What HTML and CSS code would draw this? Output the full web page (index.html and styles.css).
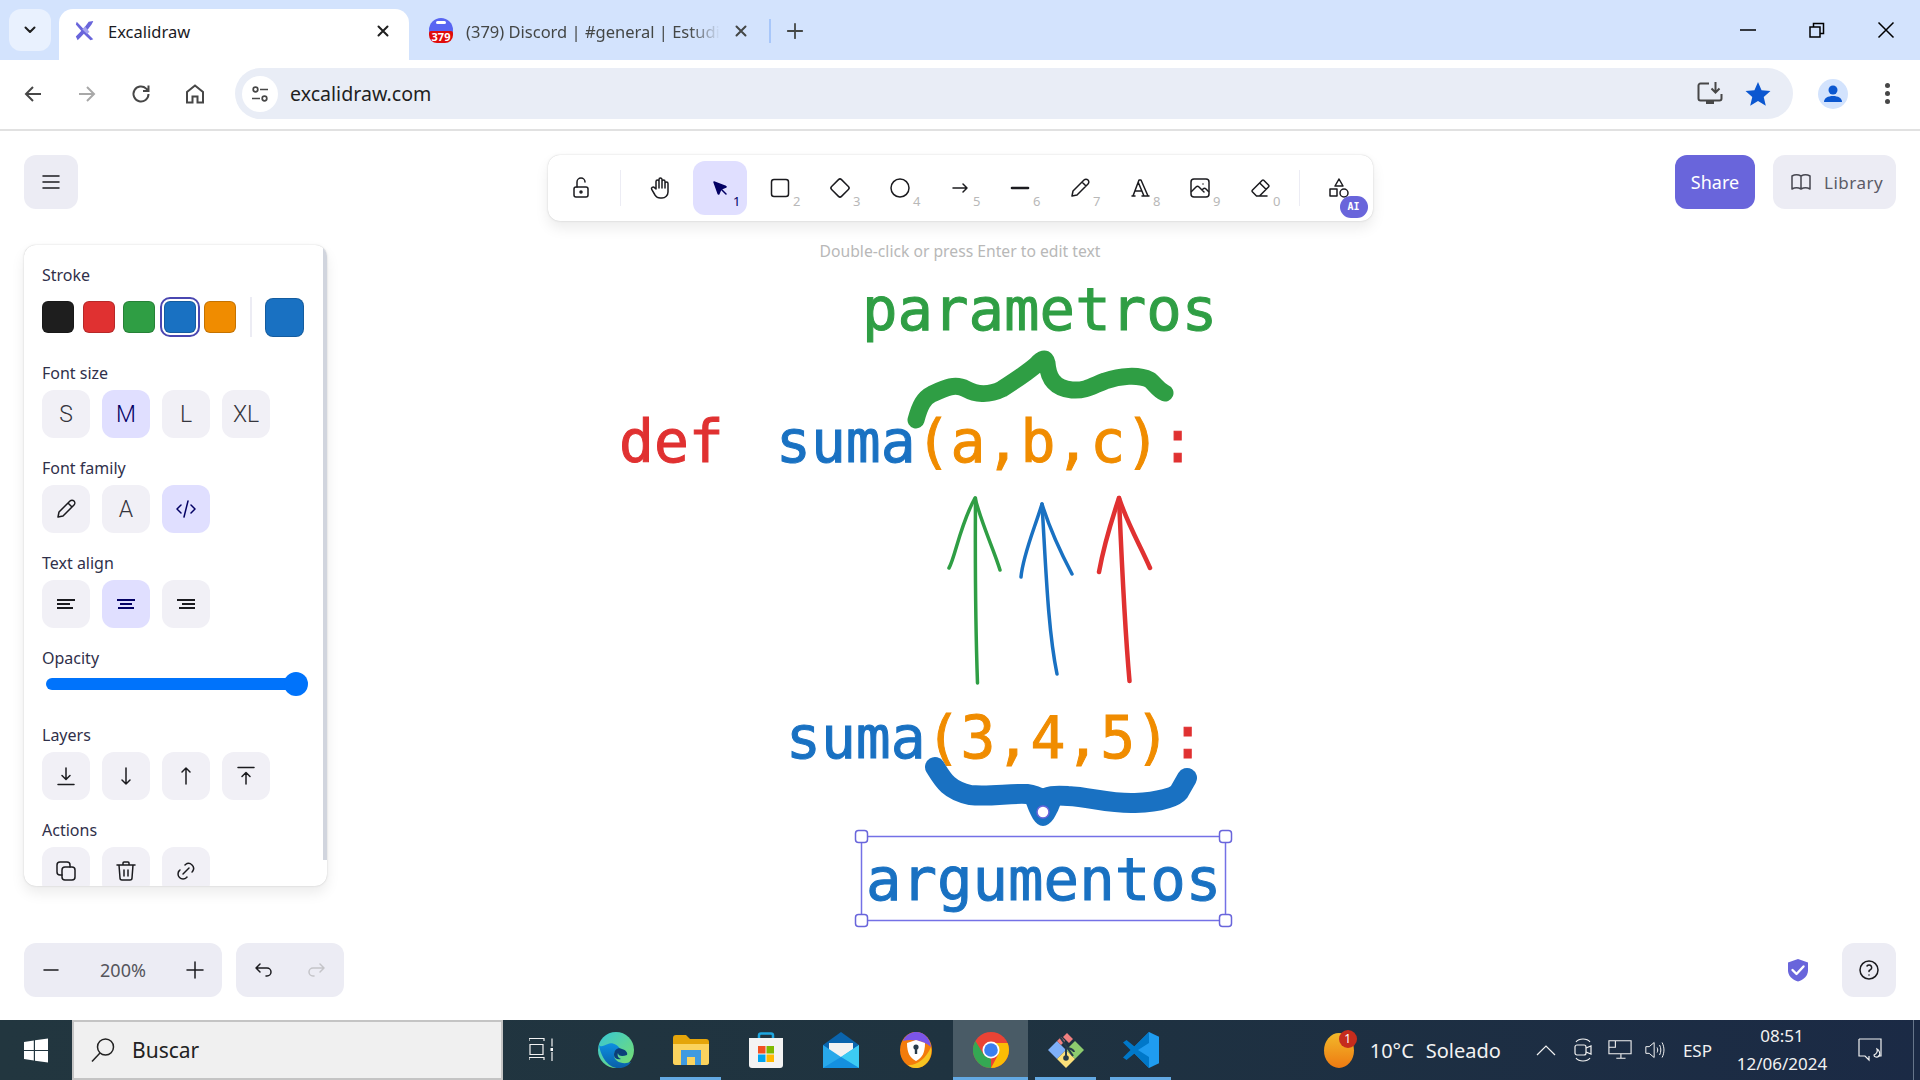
FILE: index.html
```html
<!DOCTYPE html>
<html lang="en">
<head>
    <meta charset="UTF-8">
    <meta name="viewport" content="width=device-width, initial-scale=1.0">
    <title>Excalidraw</title>
    <link rel="stylesheet" href="styles.css">
</head>
<body>

    <!-- browser tabs -->
    <div class="tabstrip">
        <div class="tabSearch">
            <svg class="ico16" viewBox="0 0 16 16"><path d="M3.500 5.500L8 10l4.500-4.500" class="thick"/></svg>
        </div>
        <div class="tab tabActive">
            <svg class="favicon" viewBox="0 0 24 24">
                <path d="M3 2c5 5 11 12 18 19l-3 1C12 17 7 11 2 5z" fill="#6965db"/>
                <path d="M21 1c-1 4-8 12-17 21l-2-4c5-5 10-10 14-16z" fill="#6965db"/>
                <path d="M9 10l5 5 3-2-5-6z" fill="#a5a3f0"/>
            </svg>
            <span class="tabTitle">Excalidraw</span>
            <svg class="tabClose" viewBox="0 0 16 16"><path d="M3.500 3.500l9 9M12.500 3.500l-9 9" class="thick"/></svg>
        </div>
        <div class="tab tabOther">
            <svg class="favicon favBig" viewBox="0 0 24 24">
                <circle cx="12" cy="12" r="12" fill="#5865f2"/>
                <rect x="7" y="3" width="10" height="3" rx="1.500" fill="#fff"/>
            </svg>
            <span class="favBadge">379</span>
            <span class="tabTitle tabFade">(379) Discord | #general | Estudi</span>
            <svg class="tabClose greyClose" viewBox="0 0 16 16"><path d="M3.500 3.500l9 9M12.500 3.500l-9 9" class="thick"/></svg>
        </div>
        <div class="tabDivider"></div>
        <svg class="newTab" viewBox="0 0 20 20"><path d="M10 2v16M2 10h16" class="thick"/></svg>
        <div class="windowButtons">
            <svg viewBox="0 0 16 16"><path d="M0 8h16" class="winLine"/></svg>
            <svg viewBox="0 0 16 16"><path d="M1 5h10v10H1zM4.500 5V1.500h10V11.500H11" class="winLine"/></svg>
            <svg viewBox="0 0 16 16"><path d="M.5.500l15 15M15.500.500l-15 15" class="winLine"/></svg>
        </div>
    </div>

    <!-- browser address row -->
    <div class="navbar">
        <div class="navIcons">
            <svg viewBox="0 0 24 24"><path d="M20 12H5M12 5l-7 7 7 7" class="navStroke"/></svg>
            <svg class="disabled" viewBox="0 0 24 24"><path d="M4 12h15M12 5l7 7-7 7" class="navStroke"/></svg>
            <svg viewBox="0 0 24 24"><path d="M19.500 12a7.500 7.500 0 1 1-2.300-5.400L19.500 9M19.500 3.500V9H14" class="navStroke"/></svg>
            <svg viewBox="0 0 24 24"><path d="M4 20.500V10l8-6.500 8 6.500v10.500h-5.500v-6h-5v6z" class="navStroke"/></svg>
        </div>
        <div class="omnibox">
            <div class="siteInfo">
                <svg viewBox="0 0 20 20">
                    <circle cx="5.500" cy="5.500" r="2.300" class="navStroke thin"/>
                    <path d="M10 5.500h8M2 14.500h8" class="navStroke thin"/>
                    <circle cx="14.500" cy="14.500" r="2.300" class="navStroke thin"/>
                </svg>
            </div>
            <span class="url">excalidraw.com</span>
            <svg class="omniInstall" viewBox="0 0 26 26">
                <path d="M12 2.500H3.500a2 2 0 0 0-2 2v13a2 2 0 0 0 2 2h19a2 2 0 0 0 2-2V13" class="navStroke"/>
                <path d="M9 20h8v3H9z" fill="#474747"/>
                <path d="M18.500 1v10M14.500 7.500l4 4 4-4" class="navStroke"/>
            </svg>
            <svg class="omniStar" viewBox="0 0 24 24"><path d="M12 1l3.300 7.600 8.200.700-6.200 5.400 1.900 8.100L12 18.500l-7.200 4.300 1.900-8.100L.5 9.300l8.200-.700z" fill="#0b57d0"/></svg>
        </div>
        <div class="avatar">
            <svg viewBox="0 0 24 24"><circle cx="12" cy="8" r="4.500" fill="#0b57d0"/><path d="M3 20c0-4 4-6 9-6s9 2 9 6z" fill="#0b57d0"/></svg>
        </div>
        <div class="kebab"><i></i><i></i><i></i></div>
    </div>

    <!-- excalidraw app -->
    <div class="app">

        <svg class="canvas" viewBox="0 131 1920 889">
            <text x="862" y="330" class="cvText cvLarge cvGreen">parametros</text>
            <text x="619" y="462" class="cvText cvRed">def</text>
            <text x="776" y="462" class="cvText"><tspan class="cvBlue">suma</tspan><tspan class="cvOrange">(a,b,c)</tspan><tspan class="cvRed">:</tspan></text>
            <text x="786" y="758" class="cvText"><tspan class="cvBlue">suma</tspan><tspan class="cvOrange">(3,4,5)</tspan><tspan class="cvRed">:</tspan></text>
            <text x="866" y="900" class="cvText cvLarge cvBlue">argumentos</text>

            <path d="M916 420C920 405 924 398 932 394C945 388 955 383 966 389C975 394 988 396 1002 389C1016 380 1028 372 1036 365C1042 358 1046 357 1047 363C1048 375 1052 388 1072 390C1086 391 1092 386 1105 381C1120 376 1138 374 1150 380C1156 385 1158 390 1165 393" class="brace braceGreen"/>

            <path d="M949 568C955 558 960 525 975 498C982 525 994 550 1000 570" class="head headGreen"/>
            <path d="M975.500 498C975 570 976 640 977.500 683" class="head headGreen"/>
            <path d="M1021 577C1023 555 1034 530 1042 504C1050 530 1062 555 1072 574" class="head headBlue"/>
            <path d="M1042 504C1046 570 1048 630 1057 674" class="head headBlue"/>
            <path d="M1099 572C1103 550 1110 525 1119 498C1128 525 1140 545 1150 568" class="head headRed"/>
            <path d="M1119 498C1122 570 1125 630 1129.500 681" class="head headRed"/>

            <path d="M935 767C943 780 948 790 970 795C990 797 1010 793 1027 794C1036 795 1040 798 1043 800C1047 796 1054 795 1068 796C1090 797 1110 804 1135 803C1160 802 1175 797 1179 792L1187 778" class="brace braceBlue"/>
            <path d="M1025 800C1030 815 1035 826 1043 826C1051 826 1057 815 1062 800z" class="blobBlue"/>
            <circle cx="1043" cy="812" r="6" class="rotateHandle"/>

            <rect x="861.500" y="836.500" width="364" height="84" class="selBox"/>
            <rect x="855.500" y="830.500" width="12" height="12" rx="3" class="selHandle"/>
            <rect x="1219.500" y="830.500" width="12" height="12" rx="3" class="selHandle"/>
            <rect x="855.500" y="914.500" width="12" height="12" rx="3" class="selHandle"/>
            <rect x="1219.500" y="914.500" width="12" height="12" rx="3" class="selHandle"/>
        </svg>

        <div class="ui">
            <div class="topRow">
                <div class="leftCol">
                    <button class="iconBtn">
                        <svg class="ico" viewBox="0 0 24 24"><path d="M4 6h16M4 12h16M4 18h16" class="ln"/></svg>
                    </button>

                    <div class="panel">
                        <div class="scrollThumb"></div>

                        <h3>Stroke</h3>
                        <div class="swatches">
                            <span class="swatch" data-c="black"></span>
                            <span class="swatch" data-c="red"></span>
                            <span class="swatch" data-c="green"></span>
                            <span class="swatch selected" data-c="blue"></span>
                            <span class="swatch" data-c="orange"></span>
                            <span class="swatchSep"></span>
                            <span class="swatch current" data-c="blue"></span>
                        </div>

                        <h3 class="first">Font size</h3>
                        <div class="opts">
                            <span class="opt letter">S</span>
                            <span class="opt letter on">M</span>
                            <span class="opt letter">L</span>
                            <span class="opt letter">XL</span>
                        </div>

                        <h3>Font family</h3>
                        <div class="opts">
                            <span class="opt"><svg class="ico" viewBox="0 0 24 24"><path d="M4 20l1-5L16 4a2.800 2.800 0 0 1 4 4L9 19zM14 6l4 4" class="ln"/></svg></span>
                            <span class="opt letter">A</span>
                            <span class="opt on"><svg class="ico" viewBox="0 0 24 24"><path d="M7 8l-4 4 4 4M17 8l4 4-4 4M14 4l-4 16" class="ln"/></svg></span>
                        </div>

                        <h3>Text align</h3>
                        <div class="opts">
                            <span class="opt"><svg class="ico" viewBox="0 0 24 24"><path d="M3 8h18M3 12h13M3 16h16" class="ln bold"/></svg></span>
                            <span class="opt on"><svg class="ico" viewBox="0 0 24 24"><path d="M3 8h18M6 12h12M4 16h16" class="ln bold"/></svg></span>
                            <span class="opt"><svg class="ico" viewBox="0 0 24 24"><path d="M3 8h18M8 12h13M5 16h16" class="ln bold"/></svg></span>
                        </div>

                        <h3>Opacity</h3>
                        <div class="slider"><span class="thumb"></span></div>

                        <h3 class="afterSlider">Layers</h3>
                        <div class="opts">
                            <span class="opt"><svg class="ico" viewBox="0 0 24 24"><path d="M12 4v11M8 11.500l4 4 4-4M4 20.500h16" class="ln"/></svg></span>
                            <span class="opt"><svg class="ico" viewBox="0 0 24 24"><path d="M12 4v16M8 16l4 4 4-4" class="ln"/></svg></span>
                            <span class="opt"><svg class="ico" viewBox="0 0 24 24"><path d="M12 20V4M8 8l4-4 4 4" class="ln"/></svg></span>
                            <span class="opt"><svg class="ico" viewBox="0 0 24 24"><path d="M12 20V9M8 12.500l4-4 4 4M4 3.500h16" class="ln"/></svg></span>
                        </div>

                        <h3>Actions</h3>
                        <div class="opts">
                            <span class="opt"><svg class="ico" viewBox="0 0 24 24"><rect x="8" y="8" width="13" height="13" rx="3" class="ln"/><path d="M16 8V6a3 3 0 0 0-3-3H6a3 3 0 0 0-3 3v7a3 3 0 0 0 3 3h2" class="ln"/></svg></span>
                            <span class="opt"><svg class="ico" viewBox="0 0 24 24"><path d="M3 6h18M10 11v6M14 11v6M5 6l1 13a2 2 0 0 0 2 2h8a2 2 0 0 0 2-2l1-13M9 6V4a1 1 0 0 1 1-1h4a1 1 0 0 1 1 1v2" class="ln"/></svg></span>
                            <span class="opt"><svg class="ico" viewBox="0 0 24 24"><path d="M9 15l6-6M11 6l.5-.5a5 5 0 0 1 7 7l-.5.500M13 18l-.4.500a5 5 0 0 1-7.100 0 5 5 0 0 1 0-7.100l.5-.400" class="ln"/></svg></span>
                        </div>
                    </div>
                </div>

                <div class="centerCol">
                    <div class="toolbar">
                        <span class="tool"><svg class="ico" viewBox="0 0 24 24"><rect x="5" y="11" width="14" height="10" rx="2" class="ln"/><circle cx="12" cy="16" r="1" class="ln"/><path d="M8 11V6a4 4 0 0 1 8 0" class="ln"/></svg></span>
                        <span class="toolSep"></span>
                        <span class="tool"><svg class="ico" viewBox="0 0 24 24"><path d="M8 13V5.500a1.500 1.500 0 0 1 3 0V12M11 5.500v-2a1.500 1.500 0 1 1 3 0V12M14 5.500a1.500 1.500 0 0 1 3 0V12M17 7.500a1.500 1.500 0 0 1 3 0V16a6 6 0 0 1-6 6h-2 .2a6 6 0 0 1-5-2.700l-.2-.300c-.3-.5-1.400-2.400-3.300-5.700a1.500 1.500 0 0 1 .5-2 1.900 1.900 0 0 1 2.300.3L8 13" class="ln"/></svg></span>
                        <span class="tool toolOn"><svg class="ico" viewBox="0 0 24 24"><path d="M6 6l4.200 11.800c.1.300.5.300.7 0l2.100-4.800 4.800-2c.3-.1.300-.5 0-.6z" class="ln solid"/><path d="M13.500 13.500L18 18" class="ln solid"/></svg><sub>1</sub></span>
                        <span class="tool"><svg class="ico" viewBox="0 0 24 24"><rect x="3.500" y="3.500" width="17" height="17" rx="2.500" class="ln"/></svg><sub>2</sub></span>
                        <span class="tool"><svg class="ico" viewBox="0 0 24 24"><path d="M10.500 20.400l-6.900-6.900c-.8-.8-.8-2.200 0-3l6.900-6.900c.8-.8 2.200-.8 3 0l6.900 6.900c.8.800.8 2.200 0 3l-6.900 6.900c-.8.800-2.200.8-3 0z" class="ln"/></svg><sub>3</sub></span>
                        <span class="tool"><svg class="ico" viewBox="0 0 24 24"><circle cx="12" cy="12" r="9" class="ln"/></svg><sub>4</sub></span>
                        <span class="tool"><svg class="ico" viewBox="0 0 24 24"><path d="M5 12h14M15 16l4-4-4-4" class="ln"/></svg><sub>5</sub></span>
                        <span class="tool"><svg class="ico" viewBox="0 0 24 24"><path d="M4 12h16" class="ln fat"/></svg><sub>6</sub></span>
                        <span class="tool"><svg class="ico" viewBox="0 0 24 24"><path d="M4 20l1-5L16 4a2.800 2.800 0 0 1 4 4L9 19zM14 6l4 4" class="ln"/></svg><sub>7</sub></span>
                        <span class="tool"><svg class="ico" viewBox="0 0 24 24"><path d="M4 20h3M14 20h7M6.900 15h6.900M10.200 6.300L16 20M5 20l6-16h2l7 16" class="ln"/></svg><sub>8</sub></span>
                        <span class="tool"><svg class="ico" viewBox="0 0 24 24"><rect x="3" y="3" width="18" height="18" rx="3" class="ln"/><path d="M15 8h.01M3.500 15.500L8 11c.9-.9 2.100-.9 3 0l5 5M14 14l1-1c.9-.9 2.100-.9 3 0l2.500 2.500" class="ln"/></svg><sub>9</sub></span>
                        <span class="tool"><svg class="ico" viewBox="0 0 24 24"><path d="M19 20H8.500l-4.200-4.300a1 1 0 0 1 0-1.400l10-10a1 1 0 0 1 1.400 0l5 5a1 1 0 0 1 0 1.400L11.500 20M18 13.300L11.700 7" class="ln"/></svg><sub>0</sub></span>
                        <span class="toolSep"></span>
                        <span class="tool"><svg class="ico" viewBox="0 0 24 24"><path d="M12 3l-4 7h8zM13 17a4 4 0 1 0 8 0 4 4 0 1 0-8 0M3 13h7v7H3z" class="ln"/></svg><em class="aiBadge">AI</em></span>
                    </div>
                    <div class="hint">Double-click or press Enter to edit text</div>
                </div>

                <div class="rightCol">
                    <button class="shareBtn">Share</button>
                    <button class="libraryBtn">
                        <svg class="ico" viewBox="0 0 24 24"><path d="M3 19a9 9 0 0 1 9 0 9 9 0 0 1 9 0M3 6a9 9 0 0 1 9 0 9 9 0 0 1 9 0M3 6v13M12 6v13M21 6v13" class="ln"/></svg>
                        <span>Library</span>
                    </button>
                </div>
            </div>

            <div class="footer">
                <div class="zoomGroup">
                    <svg class="ico" viewBox="0 0 24 24"><path d="M5 12h14" class="ln"/></svg>
                    <span class="zoomValue">200%</span>
                    <svg class="ico" viewBox="0 0 24 24"><path d="M12 4v16M4 12h16" class="ln"/></svg>
                </div>
                <div class="undoGroup">
                    <svg class="ico" viewBox="0 0 24 24"><path d="M9 14l-4-4 4-4M5 10h11a4 4 0 1 1 0 8h-1" class="ln"/></svg>
                    <svg class="ico faded" viewBox="0 0 24 24"><path d="M15 14l4-4-4-4M19 10H8a4 4 0 1 0 0 8h1" class="ln"/></svg>
                </div>
                <svg class="shield" viewBox="0 0 24 24">
                    <path d="M12 1l10 3.500v8c0 5-4 9-10 11-6-2-10-6-10-11v-8z" fill="#6965db"/>
                    <path d="M6.500 12l4 4 7-7.500" fill="none" stroke="#fff" stroke-width="2.400" stroke-linecap="round" stroke-linejoin="round"/>
                </svg>
                <button class="iconBtn">
                    <svg class="ico" viewBox="0 0 24 24"><circle cx="12" cy="12" r="9" class="ln"/><path d="M12 17v.01M12 13.500a1.500 1.500 0 0 1 1-1.500 2.600 2.600 0 1 0-3-4" class="ln"/></svg>
                </button>
            </div>
        </div>
    </div>

    <!-- windows taskbar -->
    <div class="taskbar">
        <div class="startBtn">
            <svg viewBox="0 0 24 24"><path d="M0 3.400l9.800-1.400v9.400H0zM11 1.800L24 0v11.400H11zM0 12.600h9.800V22L0 20.600zM11 12.600h13V24l-13-1.800z" fill="#fff"/></svg>
        </div>
        <div class="searchBox">
            <svg viewBox="0 0 24 24"><circle cx="14.500" cy="9" r="8" class="searchGlass"/><path d="M9 15L1 23.500" class="searchGlass"/></svg>
            <span>Buscar</span>
        </div>
        <div class="taskIcons">
            <div class="taskItem">
                <svg viewBox="0 0 24 24"><path d="M0 3V.5h15V3M0 22v-2.500h15V22M1 6.500h13v10H1zM23 .5v8M23 14v9" class="trayLine"/><path d="M21.500 10h3v3h-3z" fill="#fff"/></svg>
            </div>
            <div class="taskItem">
                <svg class="bigIcon" viewBox="0 0 36 36">
                    <defs>
                        <linearGradient id="edgeA" x1="0" y1="0" x2="1" y2="1"><stop offset="0" stop-color="#36c6d8"/><stop offset="1" stop-color="#7adf6a"/></linearGradient>
                        <linearGradient id="edgeB" x1="0" y1="0" x2="0" y2="1"><stop offset="0" stop-color="#0d8fe0"/><stop offset="1" stop-color="#0a5ea8"/></linearGradient>
                    </defs>
                    <circle cx="18" cy="18" r="18" fill="url(#edgeA)"/>
                    <path d="M1 13C3 26 11 36 20 36c6 0 10-2 13-6-8 3-17 0-17-7 0-5 4-6 7-5-3-5-9-8-13-6-4 1-7 4-9 1z" fill="url(#edgeB)"/>
                    <path d="M16 23c0-5 4-8 8-6 4 1 6 4 5 6-5 2-9 1-9-2-1 2 0 5 3 6-4 1-7-1-7-4z" fill="#0b3f7a"/>
                </svg>
            </div>
            <div class="taskItem running">
                <svg class="bigIcon" viewBox="0 0 36 36">
                    <path d="M0 6a3 3 0 0 1 3-3h10l4 4h16a3 3 0 0 1 3 3v20a3 3 0 0 1-3 3H3a3 3 0 0 1-3-3z" fill="#e5a50a"/>
                    <path d="M0 12h36v18a3 3 0 0 1-3 3H3a3 3 0 0 1-3-3z" fill="#fbd35e"/>
                    <path d="M8 18h20v15h-6v-8h-8v8H8z" fill="#3f9ae0"/>
                </svg>
            </div>
            <div class="taskItem">
                <svg class="bigIcon" viewBox="0 0 36 36">
                    <path d="M11 8V3.500a2 2 0 0 1 2-2h10a2 2 0 0 1 2 2V8" fill="none" stroke="#1ea7e0" stroke-width="2.500"/>
                    <path d="M1 6h34v27a3 3 0 0 1-3 3H4a3 3 0 0 1-3-3z" fill="#f3f3f3"/>
                    <path d="M10 14h7.500v7.500H10z" fill="#f25022"/>
                    <path d="M18.500 14H26v7.500h-7.500z" fill="#7fba00"/>
                    <path d="M10 22.500h7.500V30H10z" fill="#00a4ef"/>
                    <path d="M18.500 22.500H26V30h-7.500z" fill="#ffb900"/>
                </svg>
            </div>
            <div class="taskItem">
                <svg class="bigIcon" viewBox="0 0 36 36">
                    <path d="M0 13L18 0l18 13v5H0z" fill="#0a64ad"/>
                    <path d="M6 11h24v8l-12 7-12-7z" fill="#f2f2f2"/>
                    <path d="M0 13l18 12 18-12v23H0z" fill="#28a8ea"/>
                    <path d="M18 25l18-12v23z" fill="#3ccbf4"/>
                    <path d="M0 36l18-11 18 11z" fill="#1490df"/>
                </svg>
            </div>
            <div class="taskItem">
                <svg class="bigIcon" viewBox="0 0 36 36">
                    <ellipse cx="18" cy="18" rx="16" ry="18" fill="#f37c0c"/>
                    <path d="M5 9C8 2 14 0 18 0c8 0 14 6 15 15C28 10 16 6 5 9z" fill="#7b55e8"/>
                    <path d="M33 15c2 12-6 21-15 21-4 0-6-1-8-3 8 1 18-6 23-18z" fill="#f6c421"/>
                    <path d="M18 8l9 3c0 10-3 15-9 18-6-3-9-8-9-18z" fill="#fff"/>
                    <circle cx="18" cy="15" r="2.600" fill="#273b4a"/>
                    <path d="M16.800 16h2.400v6h-2.400z" fill="#273b4a"/>
                </svg>
            </div>
            <div class="taskItem running active">
                <svg class="bigIcon" viewBox="0 0 36 36">
                    <circle cx="18" cy="18" r="18" fill="#ea4335"/>
                    <path d="M18 36a18 18 0 0 1-15.600-27L11 23l7 4z" fill="#34a853"/>
                    <path d="M18 36c10 0 18-8 18-18 0-2-.4-5-1.400-7H18l7 12z" fill="#fbbc04"/>
                    <circle cx="18" cy="18" r="8.500" fill="#fff"/>
                    <circle cx="18" cy="18" r="6.800" fill="#3b7ff0"/>
                </svg>
            </div>
            <div class="taskItem running">
                <svg class="bigIcon" viewBox="0 0 36 36">
                    <path d="M18 18L9 9 0 18l9 9z" fill="#7fb0f8"/>
                    <path d="M18 18l9-9 9 9-9 9z" fill="#8dcb6e"/>
                    <path d="M18 18l-9 9 9 9 9-9z" fill="#fbe07a"/>
                    <path d="M15 5l4-4 6 6-4 4zM9 9l4-4 4 4-4 4z" fill="#f08080"/>
                    <path d="M12 5l13 19" stroke="#273b4a" stroke-width="2"/>
                    <circle cx="18" cy="26" r="2.800" fill="#273b4a"/>
                    <path d="M18 16v10M18 16c4 0 8 2 8 4" fill="none" stroke="#273b4a" stroke-width="2"/>
                </svg>
            </div>
            <div class="taskItem running">
                <svg class="bigIcon" viewBox="0 0 36 36">
                    <path d="M26 0l10 4.800v26.400L26 36 8 18z" fill="#1f9cf0"/>
                    <path d="M26 0l-14.500 14.500L3.500 8 0 10.500 7.500 18 0 25.500 3.500 28l8-6.500L26 36V25L15 18 26 11z" fill="#0078c9"/>
                </svg>
            </div>
        </div>

        <div class="tray">
            <div class="weather">
                <span class="sun"><em>1</em></span>
                <span>10°C</span>
                <span class="weatherText">Soleado</span>
            </div>
            <svg class="trayIcon chevron" viewBox="0 0 20 12"><path d="M1 11l9-9 9 9" class="trayLine"/></svg>
            <svg class="trayIcon meet" viewBox="0 0 20 26"><path d="M3 5C6 1 14 1 17 5M3 21c3 4 11 4 14 0" class="trayLine"/><rect x="2" y="8" width="11" height="10" rx="2" class="trayLine"/><path d="M13 11l5-2v8l-5-2" class="trayLine"/></svg>
            <svg class="trayIcon netIcon" viewBox="0 0 26 22"><path d="M4 1h21v14H1V8M9 20h10M14 15v5M1 1h7v7H1z" class="trayLine"/></svg>
            <svg class="trayIcon" viewBox="0 0 24 22"><path d="M1 7h4l6-5v18l-6-5H1zM14.500 8c1 2 1 4 0 6M17.500 5c2 4 2 8 0 12M20.500 2c3 6 3 12 0 18" class="trayLine"/></svg>
            <span class="lang">ESP</span>
            <div class="clock">
                <span>08:51</span>
                <span>12/06/2024</span>
            </div>
            <svg class="trayIcon notif" viewBox="0 0 24 24"><path d="M1 1h22v17h-3M1 1v17h6l4 4v-4" class="trayLine"/><path d="M19 11c1 3-1 5-3 6 0 2 3 3 5 1 2-2 0-6-2-7z" class="trayLine"/></svg>
            <span class="showDesktop"></span>
        </div>
    </div>

</body>
</html>
```

FILE: styles.css
```css
* { box-sizing: border-box; }

html, body {
    margin:             0;
    height:             100%;
}

body {
    width:              1920px;
    height:             1080px;
    display:            flex;
    flex-direction:     column;
    overflow:           hidden;
    background:         #fff;
    color:              #1b1b1f;
    font-family:        "Noto Sans", "Liberation Sans", sans-serif;
}

/* ---- browser tabs ---- */

.tabstrip {
    height:             60px;
    flex:               none;
    display:            flex;
    align-items:        flex-end;
    background:         #d3e3fd;
    padding-left:       9px;
}

.tabSearch {
    width:              42px;
    height:             42px;
    margin-bottom:      9px;
    margin-right:       8px;
    border-radius:      12px;
    background:         #e9f1fe;
    display:            flex;
    align-items:        center;
    justify-content:    center;
}

.ico16      { width: 16px; height: 16px; }
.thick      { fill: none; stroke: #1f1f1f; stroke-width: 2; stroke-linecap: round; stroke-linejoin: round; }

.tab {
    position:           relative;
    height:             51px;
    padding-bottom:     7px;
    display:            flex;
    align-items:        center;
    font-size:          16.500px;
}

.tabActive {
    width:              350px;
    padding-left:       15px;
    background:         #fff;
    border-radius:      14px 14px 0 0;
}

.tabOther {
    width:              362px;
    padding-left:       20px;
    color:              #444746;
}

.favicon    { width: 22px; height: 22px; flex: none; margin-right: 12px; }
.favBig     { width: 24px; height: 24px; margin-right: 13px; margin-top: -2px; }

.favBadge {
    position:           absolute;
    left:               20px;
    top:                22px;
    width:              24px;
    height:             12px;
    border-radius:      2px 2px 8px 8px;
    background:         #e00b0b;
    color:              #fff;
    font-size:          11px;
    font-weight:        700;
    line-height:        12px;
    text-align:         center;
}

.tabTitle   { white-space: nowrap; }

.tabFade {
    -webkit-mask-image: linear-gradient(to right, #000 88%, transparent);
    mask-image:         linear-gradient(to right, #000 88%, transparent);
}

.tabClose {
    position:           absolute;
    right:              18px;
    top:                14px;
    width:              16px;
    height:             16px;
}

.greyClose {
    right:              22px;
}

.greyClose .thick { stroke: #444746; }

.tabDivider {
    width:              2px;
    height:             24px;
    margin:             0 0 17px -2px;
    background:         #a8c7fa;
}

.newTab {
    width:              18px;
    height:             18px;
    margin:             0 0 20px 15px;
}

.newTab .thick { stroke: #444746; }

.windowButtons {
    margin-left:        auto;
    align-self:         flex-start;
    display:            flex;
    gap:                53px;
    padding:            22px 26px 0 0;
}

.windowButtons svg { width: 16px; height: 16px; overflow: visible; }
.winLine    { fill: none; stroke: #000; stroke-width: 1.500; }

/* ---- address row ---- */

.navbar {
    height:             71px;
    flex:               none;
    display:            flex;
    align-items:        center;
    padding-bottom:     2px;
    background:         #fff;
    border-bottom:      2px solid #e1e1e1;
    border-radius:      14px 14px 0 0;
}

.navIcons {
    width:              235px;
    flex:               none;
    padding-left:       21px;
    display:            flex;
    gap:                30px;
}

.navIcons svg { width: 24px; height: 24px; flex: none; }

.navStroke  { fill: none; stroke: #474747; stroke-width: 2; stroke-linejoin: miter; }
.thin       { stroke-width: 1.700; }
.disabled .navStroke { stroke: #a8a8a8; }

.omnibox {
    width:              1558px;
    height:             51px;
    flex:               none;
    display:            flex;
    align-items:        center;
    border-radius:      26px;
    background:         #e9edf6;
    padding-left:       7px;
}

.siteInfo {
    width:              36px;
    height:             36px;
    border-radius:      50%;
    background:         #fff;
    display:            flex;
    align-items:        center;
    justify-content:    center;
}

.siteInfo svg { width: 20px; height: 20px; }

.url {
    margin-left:        12px;
    font-size:          19.600px;
    color:              #1f1f1f;
}

.omniInstall {
    width:              26px;
    height:             26px;
    margin-left:        auto;
}

.omniStar {
    width:              26px;
    height:             26px;
    margin:             0 22px 0 22px;
}

.avatar {
    width:              30px;
    height:             30px;
    margin-left:        25px;
    border-radius:      50%;
    background:         #d3e3fd;
    display:            flex;
    align-items:        center;
    justify-content:    center;
}

.avatar svg { width: 24px; height: 24px; }

.kebab {
    margin-left:        37px;
    display:            flex;
    flex-direction:     column;
    gap:                3px;
}

.kebab i {
    width:              5px;
    height:             5px;
    border-radius:      50%;
    background:         #474747;
}

/* ---- app ---- */

.app {
    position:           relative;
    flex:               1;
    min-height:         0;
    background:         #fff;
}

.canvas {
    position:           absolute;
    left:               0;
    top:                0;
    width:              1920px;
    height:             889px;
}

.cvText {
    font-family:        "DejaVu Sans Mono", "Liberation Mono", monospace;
    font-size:          58px;
    stroke-width:       1px;
}

.cvLarge    { font-size: 59px; }

.cvGreen    { fill: #2f9e44; stroke: #2f9e44; }
.cvRed      { fill: #e03131; stroke: #e03131; }
.cvBlue     { fill: #1971c2; stroke: #1971c2; }
.cvOrange   { fill: #f08c00; stroke: #f08c00; }

.brace      { fill: none; stroke-linecap: round; stroke-linejoin: round; }
.braceGreen { stroke: #2f9e44; stroke-width: 17; }
.braceBlue  { stroke: #1971c2; stroke-width: 20; }
.blobBlue   { fill: #1971c2; }

.head       { fill: none; stroke-linecap: round; stroke-linejoin: round; }
.headGreen  { stroke: #2f9e44; stroke-width: 3.500; }
.headBlue   { stroke: #1971c2; stroke-width: 3.500; }
.headRed    { stroke: #e03131; stroke-width: 4.500; }

.rotateHandle { fill: #fff; stroke: #6965db; stroke-width: 1.500; }
.selBox       { fill: none; stroke: #7471e6; stroke-width: 1.500; }
.selHandle    { fill: #fff; stroke: #6965db; stroke-width: 1.500; }

.ui {
    position:           relative;
    height:             100%;
    padding:            24px 24px 23px;
    display:            flex;
    flex-direction:     column;
    justify-content:    space-between;
}

.topRow {
    display:            grid;
    grid-template-columns: 1fr auto 1fr;
}

.leftCol {
    display:            flex;
    flex-direction:     column;
    align-items:        flex-start;
}

.iconBtn {
    width:              54px;
    height:             54px;
    padding:            0;
    border:             0;
    border-radius:      12px;
    background:         #ececf4;
    display:            flex;
    align-items:        center;
    justify-content:    center;
}

.ico        { width: 24px; height: 24px; display: block; }
.ln         { fill: none; stroke: #1b1b1f; stroke-width: 1.500; stroke-linecap: round; stroke-linejoin: round; }
.ln.solid   { fill: #030064; stroke: #030064; }
.ln.fat     { stroke-width: 2.600; }
.ln.bold    { stroke-width: 2; stroke-linecap: butt; }
.faded .ln  { stroke: #c4c4c8; }

/* properties panel */

.panel {
    position:           relative;
    width:              303px;
    height:             641px;
    margin-top:         36px;
    padding:            19px 0 0 18px;
    overflow:           hidden;
    background:         #fff;
    border-radius:      12px;
    box-shadow:         0 0 1px rgba(0, 0, 0, .17), 0 0 3px rgba(0, 0, 0, .08), 0 7px 14px rgba(0, 0, 0, .08);
}

.scrollThumb {
    position:           absolute;
    right:              0;
    top:                0;
    width:              4px;
    height:             615px;
    background:         #d1d5de;
}

.panel h3 {
    margin:             19px 0 6px;
    height:             22px;
    font-size:          16px;
    line-height:        22px;
    font-weight:        400;
    color:              #30304a;
}

.panel h3:first-of-type { margin-top: 0; }
.panel h3.first         { margin-top: 25px; }
.panel h3.afterSlider   { margin-top: 34px; }

.swatches {
    height:             40px;
    margin-top:         11px;
    display:            flex;
    align-items:        center;
    gap:                8.500px;
}

.swatch {
    width:              32px;
    height:             32px;
    flex:               none;
    border-radius:      6px;
    border:             1px solid rgba(0, 0, 0, .18);
}

.swatch[data-c=black]   { background: #1e1e1e; }
.swatch[data-c=red]     { background: #e03131; }
.swatch[data-c=green]   { background: #2f9e44; }
.swatch[data-c=blue]    { background: #1971c2; }
.swatch[data-c=orange]  { background: #f08c00; }

.swatch.selected {
    outline:            2px solid #4a47b1;
    outline-offset:     2px;
}

.swatch.current {
    width:              39px;
    height:             39px;
    border-radius:      8px;
}

.swatchSep {
    width:              2px;
    height:             40px;
    margin:             0 5px;
    background:         #ececf4;
}

.opts {
    display:            flex;
    gap:                12px;
}

.opt {
    width:              48px;
    height:             48px;
    flex:               none;
    border-radius:      12px;
    background:         #f1f0f6;
    display:            flex;
    align-items:        center;
    justify-content:    center;
    color:              #35353d;
}

.opt.on             { background: #e0dfff; color: #030064; }
.opt.on .ln         { stroke: #030064; }

.letter {
    font-family:        Roboto, "Noto Sans", sans-serif;
    font-weight:        300;
    font-size:          23px;
}

.slider {
    position:           relative;
    width:              258px;
    height:             12px;
    margin:             9px 0 0 4px;
    border-radius:      6px;
    background:         #0073fb;
}

.thumb {
    position:           absolute;
    right:              -4px;
    top:                -6px;
    width:              24px;
    height:             24px;
    border-radius:      50%;
    background:         #0073fb;
}

/* top toolbar */

.centerCol {
    display:            flex;
    flex-direction:     column;
    align-items:        center;
}

.toolbar {
    height:             66px;
    padding:            6px 7px 6px 6px;
    display:            flex;
    align-items:        center;
    gap:                6px;
    background:         #fff;
    border-radius:      12px;
    box-shadow:         0 0 1px rgba(0, 0, 0, .17), 0 0 3px rgba(0, 0, 0, .08), 0 7px 14px rgba(0, 0, 0, .08);
}

.tool {
    position:           relative;
    width:              54px;
    height:             54px;
    flex:               none;
    border-radius:      12px;
    display:            flex;
    align-items:        center;
    justify-content:    center;
}

.toolOn { background: #e0dfff; }

.tool sub {
    position:           absolute;
    right:              6px;
    bottom:             7px;
    font-size:          13px;
    line-height:        14px;
    color:              #b8b8b8;
}

.toolOn sub { color: #030064; }

.toolSep {
    width:              1px;
    height:             36px;
    margin:             0 6px;
    flex:               none;
    background:         #ececf4;
}

.aiBadge {
    position:           absolute;
    right:              -2px;
    bottom:             -3px;
    width:              28px;
    height:             22px;
    border-radius:      11px;
    background:         #6965db;
    color:              #fff;
    font-family:        "DejaVu Sans Mono", monospace;
    font-style:         normal;
    font-weight:        700;
    font-size:          10px;
    line-height:        22px;
    text-align:         center;
}

.hint {
    margin-top:         19px;
    font-size:          15.700px;
    line-height:        22px;
    color:              #b8b8b8;
}

.rightCol {
    display:            flex;
    justify-content:    flex-end;
    align-items:        flex-start;
    gap:                18px;
}

.shareBtn {
    width:              80px;
    height:             54px;
    padding:            0;
    border:             0;
    border-radius:      12px;
    background:         #6965db;
    color:              #fff;
    font: inherit;
    font-size:          18px;
}

.libraryBtn {
    width:              123px;
    height:             54px;
    padding:            0 0 0 16px;
    border:             0;
    border-radius:      12px;
    background:         #ececf4;
    color:              #5b5b66;
    font: inherit;
    font-size:          17px;
    letter-spacing:     .5px;
    display:            flex;
    align-items:        center;
    gap:                11px;
}

.libraryBtn .ln { stroke: #46464f; }

/* bottom bar */

.footer {
    display:            flex;
    align-items:        center;
}

.zoomGroup, .undoGroup {
    height:             54px;
    border-radius:      12px;
    background:         #ececf4;
    display:            flex;
    align-items:        center;
    justify-content:    space-between;
}

.zoomGroup  { width: 198px; padding: 0 15px; }
.undoGroup  { width: 108px; margin: 0 auto 0 14px; padding: 0 15px; }
.zoomValue  { font-size: 18px; color: #55555c; }

.shield {
    width:              24px;
    height:             28px;
    margin-right:       32px;
}

/* ---- taskbar ---- */

.taskbar {
    height:             60px;
    flex:               none;
    display:            flex;
    background:         linear-gradient(to right, #22363f, #1f3340 50%, #1b2a45);
    color:              #fff;
}

.startBtn {
    width:              72px;
    display:            flex;
    align-items:        center;
    justify-content:    center;
}

.startBtn svg { width: 24px; height: 25px; }

.searchBox {
    width:              431px;
    flex:               none;
    display:            flex;
    align-items:        center;
    padding-left:       17px;
    background:         #f0f0f0;
    border:             2px solid #c4c4c4;
    color:              #222;
    font-size:          21px;
}

.searchBox svg { width: 24px; height: 24px; margin-right: 17px; }

.searchGlass { fill: none; stroke: #222; stroke-width: 1.500; }

.taskIcons {
    display:            flex;
}

.taskItem {
    position:           relative;
    width:              75px;
    height:             60px;
    display:            flex;
    align-items:        center;
    justify-content:    center;
}

.taskItem svg       { width: 24px; height: 24px; }
.taskItem .bigIcon  { width: 36px; height: 36px; }

.taskItem.running::after {
    content:            "";
    position:           absolute;
    left:               7px;
    right:              7px;
    bottom:             0;
    height:             3px;
    background:         #63a9e3;
}

.taskItem.active { background: #495b66; }

.taskItem.active::after {
    left:               0;
    right:              0;
}

.tray {
    margin-left:        auto;
    display:            flex;
    align-items:        center;
    font-size:          20px;
    color:              #f2f2f2;
}

.weather {
    display:            flex;
    align-items:        center;
    margin-right:       35px;
}

.sun {
    position:           relative;
    width:              30px;
    height:             35px;
    margin-right:       16px;
    border-radius:      50%;
    background:         linear-gradient(#f2b92a, #ee7a12);
}

.sun em {
    position:           absolute;
    right:              -3px;
    top:                -3px;
    width:              18px;
    height:             18px;
    border-radius:      50%;
    background:         #c62c1d;
    color:              #fff;
    font-style:         normal;
    font-size:          12px;
    line-height:        18px;
    text-align:         center;
}

.weatherText { margin-left: 12px; }

.trayIcon {
    width:              20px;
    height:             26px;
    margin-right:       16px;
}

.chevron    { height: 12px; margin-right: 17px; }
.meet       { margin-right: 15px; }
.netIcon    { width: 24px; height: 22px; margin-right: 13px; }
.trayLine   { fill: none; stroke: #f2f2f2; stroke-width: 1.200; }

.lang {
    font-size:          17px;
    margin:             0 20px 0 2px;
}

.clock {
    width:              100px;
    display:            flex;
    flex-direction:     column;
    align-items:        center;
    font-size:          17px;
    line-height:        28px;
}

.notif {
    width:              24px;
    height:             24px;
    margin:             0 31px 0 26px;
}

.showDesktop {
    width:              1px;
    height:             60px;
    margin-right:       6px;
    background:         #66758a;
}
```
